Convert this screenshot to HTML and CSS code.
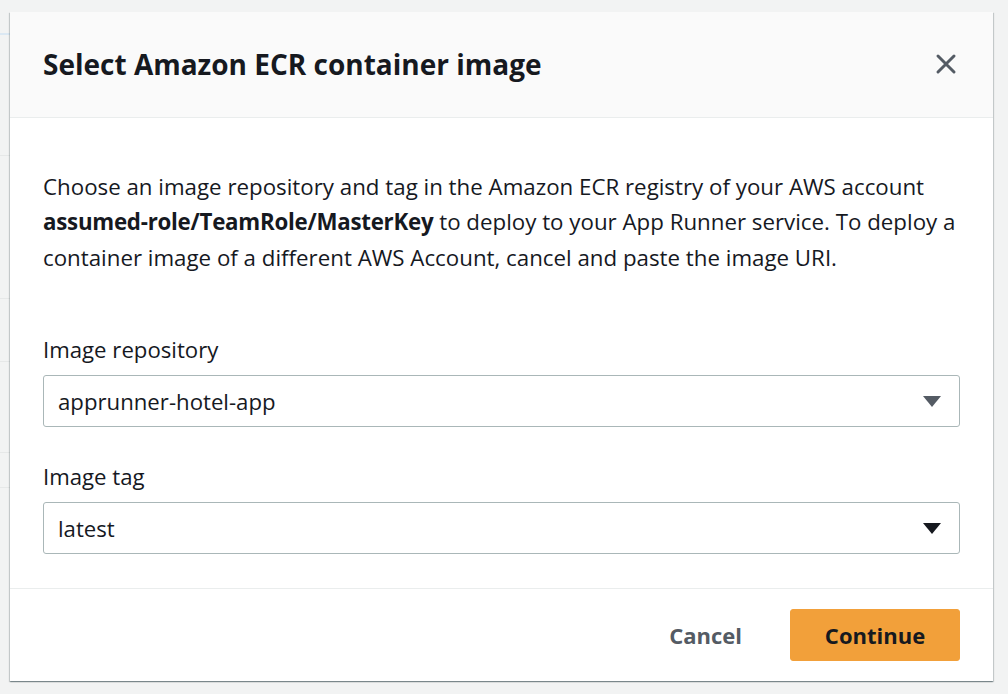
FILE: index.html
```html
<!DOCTYPE html>
<html lang="en">
<head>
<meta charset="utf-8">
<title>Select Amazon ECR container image</title>
<link rel="stylesheet" href="styles.css">
</head>
<body>
<div class="backdrop">
  <div class="bg-page" aria-hidden="true">
    <div class="bg-line bg-line-top"></div>
    <div class="bg-row r1"></div>
    <div class="bg-row r2"></div>
    <div class="bg-row r3"></div>
    <div class="bg-row r4"></div>
    <div class="bg-row r5"></div>
  </div>
  <div class="modal" role="dialog" aria-labelledby="modal-title">
    <div class="modal-header">
      <h2 id="modal-title" class="modal-title">Select Amazon ECR container image</h2>
      <button class="close-btn" aria-label="Close">
        <svg width="22" height="22" viewBox="0 0 22 22"><path d="M3 3 L19 19 M19 3 L3 19" stroke="#545b64" stroke-width="3" stroke-linecap="round" fill="none"/></svg>
      </button>
    </div>
    <div class="modal-body">
      <p class="intro">Choose an image repository and tag in the Amazon ECR registry of your AWS account <b>assumed-role/TeamRole/MasterKey</b> to deploy to your App Runner service. To deploy a container image of a different AWS Account, cancel and paste the image URI.</p>
      <div class="field">
        <label class="field-label">Image repository</label>
        <div class="select">
          <span class="select-value">apprunner-hotel-app</span>
          <svg class="caret" width="18" height="11" viewBox="0 0 18 11"><path d="M0 0 H18 L9 11 Z" fill="#545b64"/></svg>
        </div>
      </div>
      <div class="field">
        <label class="field-label">Image tag</label>
        <div class="select">
          <span class="select-value">latest</span>
          <svg class="caret" width="18" height="11" viewBox="0 0 18 11"><path d="M0 0 H18 L9 11 Z" fill="#16191f"/></svg>
        </div>
      </div>
    </div>
    <div class="modal-footer">
      <button class="btn btn-link">Cancel</button>
      <button class="btn btn-primary">Continue</button>
    </div>
  </div>
</div>
</body>
</html>
```
FILE: styles.css
```css
* { box-sizing: border-box; }
html, body {
  margin: 0;
  padding: 0;
  background: #f2f3f3;
  font-family: "Open Sans", "Noto Sans", Arial, sans-serif;
  color: #16191f;
}
.backdrop {
  position: relative;
  width: 1008px;
  height: 694px;
  padding: 12px 15px 0 10px;
  overflow: hidden;
}
.bg-page {
  position: absolute;
  inset: 0;
  z-index: 0;
}
.bg-line { position: absolute; left: 0; width: 10px; height: 2px; background: #dbe8f3; }
.bg-line-top { top: 33px; }
.bg-row { position: absolute; left: 0; width: 10px; height: 1px; background: #e6e8e8; }
.r1 { top: 155px; }
.r2 { top: 298px; }
.r3 { top: 361px; }
.r4 { top: 452px; }
.r5 { top: 487px; }
.modal {
  position: relative;
  z-index: 1;
  width: 983px;
  height: 669px;
  background: #ffffff;
  box-shadow: 0 1px 1px 0 rgba(0, 28, 36, 0.3), 1px 1px 1px 0 rgba(0, 28, 36, 0.15), -1px 1px 1px 0 rgba(0, 28, 36, 0.15);
  display: flex;
  flex-direction: column;
}
.modal-header {
  height: 107px;
  background: #fafafa;
  border-bottom: 1px solid #eaeded;
  display: flex;
  align-items: center;
  justify-content: space-between;
  padding: 0 36px 0 33px;
}
.modal-title {
  margin: 0;
  font-size: 28px;
  font-weight: 700;
  line-height: 38px;
  color: #16191f;
}
.close-btn {
  border: 0;
  background: transparent;
  padding: 0;
  width: 22px;
  height: 22px;
  display: flex;
  cursor: pointer;
}
.modal-body {
  flex: 1;
  padding: 51px 33px 0 33px;
  border-bottom: 1px solid #eaeded;
}
.intro {
  margin: 0 -6px 59px 0;
  font-size: 22.3px;
  line-height: 35.5px;
  color: #16191f;
}
.intro b { font-weight: 700; letter-spacing: -0.25px; }
.field { margin-bottom: 34px; }
.field-label {
  display: block;
  font-size: 22.2px;
  line-height: 32px;
  margin-bottom: 9px;
  color: #16191f;
}
.select {
  height: 52px;
  border: 1px solid #aab7b8;
  border-radius: 3px;
  background: #ffffff;
  display: flex;
  align-items: center;
  justify-content: space-between;
  padding: 0 18px 0 14px;
}
.select-value {
  font-size: 22.2px;
  color: #16191f;
}
.modal-footer {
  height: 93px;
  display: flex;
  align-items: center;
  justify-content: flex-end;
  padding: 0 33px;
  gap: 12px;
}
.btn {
  font-family: "Open Sans", "Noto Sans", Arial, sans-serif;
  font-size: 22px;
  font-weight: 700;
  border-radius: 3px;
  cursor: pointer;
}
.btn-link {
  background: transparent;
  border: 0;
  color: #545b64;
  padding: 0 36px;
  height: 52px;
}
.btn-primary {
  background: #f2a03a;
  border: 1px solid #f2a03a;
  color: #16191f;
  width: 170px;
  height: 52px;
}
```
